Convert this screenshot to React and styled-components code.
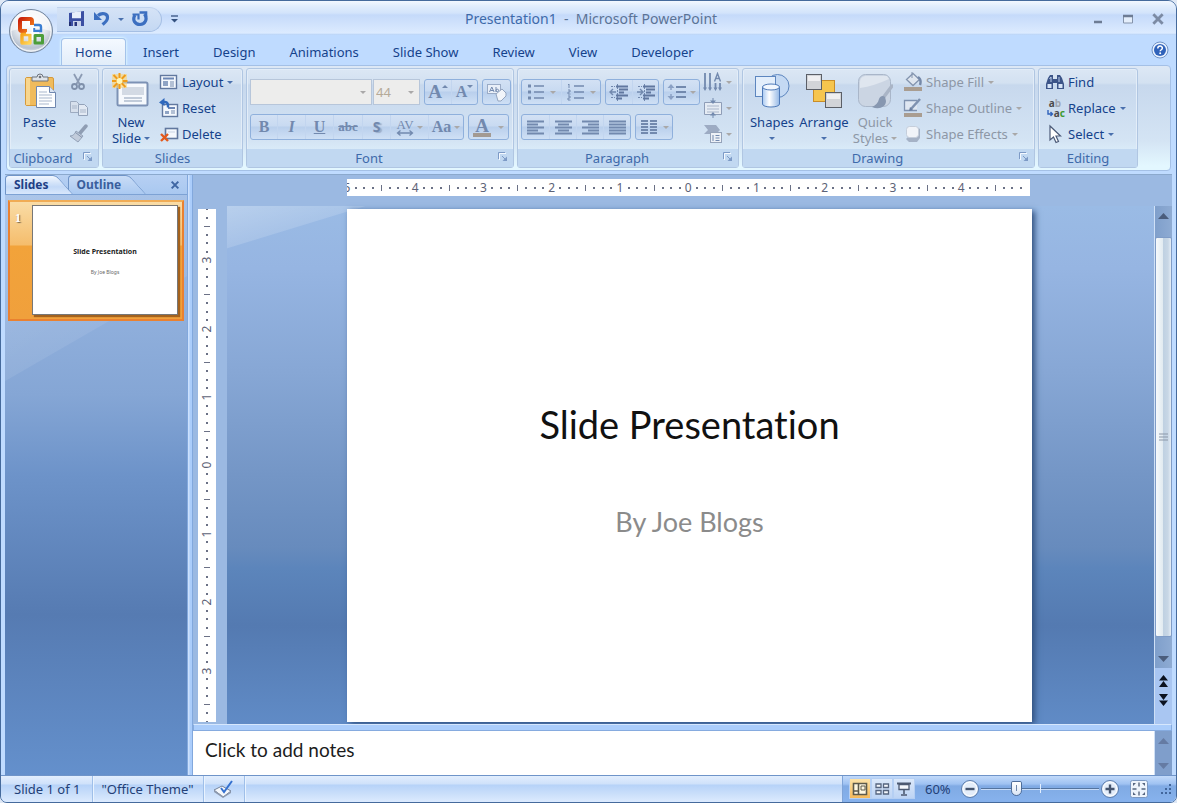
import React from 'react';
import styled, { createGlobalStyle, css } from 'styled-components';

const ink = '#15428b';
const muted = '#8d97a6';
const dim = '#7289ae';
const ui = "'Noto Sans', 'Open Sans', sans-serif";

const Global = createGlobalStyle`
  * { box-sizing: border-box; }
  body { margin: 0; background: #dfe8f5; font: 13px/16px ${ui}; color: ${ink}; }
  button, select, input, textarea { font: inherit; color: inherit; margin: 0; padding: 0; border: 0; background: none; }
  h1, h2, p { margin: 0; font-weight: 400; }
  svg { display: block; flex: none; }
`;

/* ---------- window frame ---------- */
const Window = styled.div`
  position: relative;
  min-height: 100vh;
  display: flex;
  flex-direction: column;
  border: 1px solid #456a9c;
  border-radius: 9px 9px 7px 7px;
  overflow: hidden;
  background: #bfdbff;
`;
const TitleBar = styled.header`
  display: flex;
  align-items: center;
  height: 34px;
  padding: 2px 8px 0 56px;
  background: linear-gradient(#f3f8ff 0, #e1edfd 5px, #d3e4fb 12px, #c5dafa 14px, #dcebff 32px, #b5d1f6 34px);
`;
const QuickBar = styled.div`
  display: flex;
  align-items: center;
  gap: 3px;
  width: 105px;
  height: 25px;
  padding: 0 8px 0 11px;
  border: 1px solid #a5bfe4;
  border-top-color: #c0d3ee;
  border-left: 0;
  border-radius: 0 13px 13px 0;
  background: linear-gradient(#d5e3f6, #c4d8f3);
`;
const IconButton = styled.button`
  display: flex;
  align-items: center;
  justify-content: center;
  min-width: ${p => p.$w || 20}px;
  height: ${p => p.$h || 22}px;
`;
const Title = styled.h1`
  flex: 1;
  padding-right: 92px;
  text-align: center;
  font-size: 14px;
  line-height: 18px;
  color: #5b7396;
  span { color: #3e6aaa; }
`;
const WindowButtons = styled.div`
  display: flex;
  gap: 10px;
`;
const Orb = styled.button`
  position: absolute;
  left: 7px;
  top: 6px;
  width: 46px;
  height: 46px;
`;

/* ---------- ribbon ---------- */
const TabRow = styled.nav`
  display: flex;
  align-items: flex-end;
  height: 30px;
  padding: 0 7px 0 60px;
`;
const RibbonTab = styled.button`
  height: 27px;
  padding: 0 17px;
  ${p => p.$active && css`
    padding: 0 13px;
    border: 1px solid #a4c3ea;
    border-bottom: 0;
    border-radius: 4px 4px 0 0;
    background: linear-gradient(#f4f9ff, #e2edf9);
    box-shadow: 0 0 2px 1px #d9f2ff;
  `}
`;
const HelpButton = styled.button`
  margin-left: auto;
  height: 30px;
`;
const Ribbon = styled.div`
  display: flex;
  gap: 3px;
  margin: 0 5px;
  padding: 2px;
  border: 1px solid #a4c0e6;
  border-radius: 4px;
  background: linear-gradient(#dde8f5 0, #d3e1f1 17px, #c7d8ed 19px, #d4e4f4 75px, #e3f7ff 100px);
`;
const Group = styled.section`
  display: flex;
  flex-direction: column;
  flex: none;
  width: ${p => p.$w}px;
  border: 1px solid #b0c6e2;
  border-radius: 3px;
  box-shadow: inset 0 0 0 1px #e3edf8;
`;
const GroupBody = styled.div`
  display: flex;
  height: 80px;
  padding: 0 3px;
`;
const GroupLabel = styled.footer`
  position: relative;
  height: 18px;
  line-height: 18px;
  text-align: center;
  color: #3e6aaa;
  background: #c1d8f1;
  padding-right: ${p => p.$launch ? 22 : 0}px;
`;
const Launcher = styled.button`
  position: absolute;
  right: 4px;
  top: 2px;
`;
const BigButton = styled.button`
  display: flex;
  flex-direction: column;
  align-items: center;
  width: ${p => p.$w}px;
  padding-top: 4px;
  line-height: 16px;
  color: ${p => p.disabled ? muted : ink};
  svg:first-child { margin-bottom: 5px; }
`;
const Caption = styled.span`
  display: flex;
  align-items: center;
  justify-content: center;
  gap: 3px;
  height: 16px;
`;
const Stack = styled.div`
  display: flex;
  flex-direction: column;
`;
const RowButton = styled.button`
  display: flex;
  align-items: center;
  gap: 3px;
  height: 26px;
  padding: 0 3px;
  white-space: nowrap;
  color: ${p => p.disabled ? muted : ink};
`;
const Caret = styled.i`
  width: 0;
  height: 0;
  margin-left: ${p => p.$gap || 0}px;
  border: 3px solid transparent;
  border-top-color: ${p => p.$c || '#4a70ad'};
  border-bottom-width: 0;
`;
const ToolRows = styled.div`
  display: flex;
  flex-direction: column;
  gap: 9px;
  padding-top: 10px;
`;
const ToolRow = styled.div`
  display: flex;
  gap: 4px;
`;
const ButtonSet = styled.div`
  display: flex;
  height: 26px;
  border: 1px solid #8fb0dc;
  border-radius: 3px;
  background: linear-gradient(#d3e1f4 0, #c8daf1 11px, #b9cfec 12px, #cfe0f5 24px);
`;
const Tool = styled.button`
  display: flex;
  align-items: center;
  justify-content: center;
  gap: 3px;
  width: ${p => p.$w}px;
  color: ${dim};
  font: ${p => p.$font || "bold 16px/20px 'Liberation Serif', serif"};
  text-decoration: ${p => p.$deco || 'none'};
  text-shadow: ${p => p.$shadow ? '2px 1px 1px #9badc9' : 'none'};
  & + & { border-left: 1px solid #c2d5ef; }
`;
const Combo = styled.label`
  display: flex;
  align-items: center;
  width: ${p => p.$w}px;
  height: 26px;
  padding-right: 5px;
  border: 1px solid #b7c6da;
  background: #ededec;
  select { flex: 1; min-width: 0; padding-left: 2px; appearance: none; color: #b5aa98; opacity: 1; }
`;
const ComboPair = styled.div`
  display: flex;
  gap: 1px;
`;

/* ---------- workspace ---------- */
const Workspace = styled.main`
  flex: 1;
  display: flex;
  margin: 3px 4px 0;
  border-top: 1px solid #8ba9cd;
`;
const Sidebar = styled.aside`
  display: flex;
  flex-direction: column;
  width: 182px;
  background:
    linear-gradient(150deg, #ffffff30 0, #ffffff14 178px, transparent 179px),
    linear-gradient(#9cbbe6 0, #93b2de 120px, #85a6d5 220px, #6d93c9 300px, #567bb2 440px, #6490cc 600px);
`;
const PaneTabs = styled.div`
  display: flex;
  align-items: stretch;
  height: 20px;
  border-bottom: 1px solid #7da2d4;
  background: linear-gradient(#b7d0f3, #a9c8f0);
`;
const PaneTab = styled.button`
  position: relative;
  z-index: ${p => p.$active ? 2 : 1};
  margin-right: ${p => p.$active ? 19 : 0}px;
  padding: 0 0 0 9px;
  font-weight: 700;
  font-size: 12px;
  line-height: 16px;
  color: ${p => p.$active ? '#1f3f85' : '#3a5f9d'};
  &::before, &::after {
    content: '';
    position: absolute;
    z-index: -1;
    border: 1px solid #6f94c8;
    background: ${p => p.$active ? 'linear-gradient(#f2f7fe, #c3d9f7 60%, #d8e7fc)' : 'linear-gradient(#c9dcf6, #aac9f1)'};
  }
  &::before {
    inset: 0 -7px 0 8px;
    border-width: 1px 1px 0 0;
    border-radius: 0 4px 0 0;
    transform: skewX(42deg);
    transform-origin: top;
  }
  &::after {
    inset: 0 12px 0 0;
    border-width: 1px 0 0 1px;
    border-radius: 4px 0 0 0;
  }
`;
const PaneClose = styled.button`
  margin-left: auto;
  padding: 0 7px 0 0;
`;
const Thumb = styled.button`
  display: flex;
  align-items: stretch;
  margin: 5px 3px 0;
  height: 121px;
  border: 2px solid #ea8130;
  border-top-color: #f0ac55;
  background: linear-gradient(#f9dca6 0, #f5bd6c 43px, #f2a33a 44px, #f0a03c);
`;
const ThumbNumber = styled.span`
  width: 22px;
  padding: 8px 6px 0 0;
  font: bold 12px/16px 'Liberation Serif', serif;
  color: #fff;
  text-shadow: 1px 1px 1px #7a6446;
`;
const ThumbPage = styled.span`
  flex: 1;
  margin: 3px 4px 4px 0;
  display: flex;
  flex-direction: column;
  align-items: center;
  padding-top: 41px;
  border: 1px solid #777;
  background: #fff;
  box-shadow: 2px 2px 1px #a4621d;
  color: #222;
  font: bold 7px/10px ${ui};
  small { margin-top: 11px; font: 5px/8px ${ui}; color: #666; }
`;
const Splitter = styled.div`
  width: 6px;
  border: 1px solid #82a8dd;
  border-width: 0 1px;
  background: linear-gradient(90deg, #d5e6fd, #abcdfb 60%);
`;
const Editor = styled.div`
  flex: 1;
  min-width: 0;
  display: flex;
  flex-direction: column;
`;
const Stage = styled.div`
  flex: 1;
  display: grid;
  grid-template: 31px 1fr / 34px 1fr 18px;
  background: #9bb9e2;
`;
const RulerTop = styled.div`
  grid-column: 2;
  display: flex;
  align-items: flex-start;
  padding: 4px 124px 0 120px;
`;
const Scale = styled.div`
  display: flex;
  justify-content: space-between;
  align-items: center;
  flex: 1;
  overflow: hidden;
  background: #fff;
  font-size: 12px;
  line-height: 16px;
  color: #5c6277;
  ${p => p.$v ? css`flex-direction: column; width: 18px;` : css`height: 17px;`}
`;
const Mark = styled.span`
  display: flex;
  align-items: center;
  justify-content: center;
  flex: none;
  ${p => p.$v ? css`height: 0; span { transform: rotate(-90deg); }` : css`width: 0;`}
`;
const Tick = styled.i`
  flex: none;
  background: #6b7186;
  ${p => {
    const long = p.$half ? 6 : 2;
    const thick = p.$half ? 1 : 2;
    return p.$v ? `width: ${long}px; height: ${thick}px;` : `width: ${thick}px; height: ${long}px;`;
  }}
`;
const RulerLeft = styled.div`
  grid-column: 1;
  display: flex;
  padding: 3px 11px 2px 5px;
`;
const Canvas = styled.div`
  display: flex;
  padding: 3px 122px 2px 120px;
  background:
    linear-gradient(163deg, #ffffff4d 0, #ffffff26 40px, transparent 41px),
    linear-gradient(#9abbe5 0, #96b5e2 12%, #87a7d5 32%, #7496c6 52%, #678bbd 66%, #5c85bb 70%, #547ab1 81%, #608bc6 100%);
`;
const Slide = styled.article`
  flex: 1;
  display: flex;
  flex-direction: column;
  align-items: center;
  padding-top: 190px;
  background: #fff;
  box-shadow: 3px 2px 6px #30507f;
  font-family: Lato, 'Open Sans', sans-serif;
  font-variant-ligatures: none;
`;
const SlideTitle = styled.h2`
  font-size: 38px;
  line-height: 50px;
  color: #111;
`;
const Subtitle = styled.p`
  margin-top: 56px;
  font-size: 27px;
  line-height: 34px;
  color: #8b8b8b;
`;
const Scroll = styled.div`
  display: flex;
  flex-direction: column;
  border-left: 1px solid #cfe0f6;
  background: #a9c6f2;
`;
const ScrollTrack = styled.div`
  flex: 1;
  display: flex;
  flex-direction: column;
  background: linear-gradient(90deg, #7f9fcb, #8eabd3);
`;
const Arrow = styled.button`
  height: ${p => p.$h || 19}px;
  display: flex;
  flex-direction: column;
  align-items: center;
  justify-content: center;
`;
const ScrollThumb = styled.div`
  flex: 1;
  display: flex;
  align-items: center;
  justify-content: center;
  margin-top: 12px;
  margin-bottom: 12px;
  border: 1px solid #7f9cc7;
  border-radius: 2px;
  background: linear-gradient(90deg, #f6f9fb, #e2ebf1 45%, #c0d1e2 50%, #c8d7e6 80%, #e6eef6);
`;
const PagerButtons = styled.div`
  height: 56px;
  padding-top: 3px;
  display: flex;
  flex-direction: column;
  align-items: center;
`;
const HSplitter = styled.div`
  height: 7px;
  border: 1px solid #86abdf;
  border-top-color: #d6e7fd;
  background: #abcdfb;
`;
const Notes = styled.div`
  display: flex;
  height: 44px;
  background: #fff;
  textarea {
    flex: 1;
    padding: 7px 12px;
    border: 0;
    outline: 0;
    resize: none;
    overflow: hidden;
    font: 19px/24px Lato, 'Open Sans', sans-serif;
    color: #1c1c1c;
  }
  textarea::placeholder { color: #1c1c1c; opacity: 1; }
`;
const NotesScroll = styled.div`
  display: flex;
  flex-direction: column;
  justify-content: space-between;
  width: 18px;
  border-left: 1px solid #cfe0f6;
  background: #7f9ecb;
`;

/* ---------- status bar ---------- */
const StatusBar = styled.footer`
  display: flex;
  align-items: stretch;
  height: 27px;
  border-top: 1px solid #6f94c9;
  background: linear-gradient(#e2eefe 0, #cfe1fa 8px, #b6d2f8 9px, #cfe2fb 20px, #dcebff);
  color: #233f77;
`;
const StatusItem = styled.div`
  display: flex;
  align-items: center;
  padding: 0 9px 1px;
  border-right: 1px solid #9fbfe9;
  box-shadow: 1px 0 #e9f3ff;
  &:first-child { padding-left: 13px; padding-right: 11px; }
`;
const StatusRight = styled.div`
  display: flex;
  align-items: center;
  margin-left: auto;
  padding: 0 4px 1px 6px;
  border-left: 1px solid #7fa4d8;
  background: linear-gradient(#c2dafa 0, #9fc2f2 8px, #80aae4 10px, #86b1ec 24px);
`;
const ViewSet = styled.div`
  display: flex;
  margin-right: 10px;
`;
const ViewButton = styled.button`
  display: flex;
  align-items: center;
  justify-content: center;
  width: 22px;
  height: 21px;
  border: 1px solid #b5cff3;
  background: ${p => p.$on ? 'linear-gradient(#fde3a8, #f5b95a)' : 'linear-gradient(#dbe8fa, #bdd4f4)'};
`;
const Percent = styled.span`
  width: 35px;
`;
const Zoom = styled.input`
  appearance: none;
  width: 118px;
  height: 20px;
  margin: 0 1px;
  background:
    linear-gradient(#e3efff, #e3efff) 59px 50% / 1px 9px no-repeat,
    linear-gradient(#54749f 0 1px, #c6dbf8 1px) 0 50% / 100% 2px no-repeat;
  &::-webkit-slider-thumb {
    appearance: none;
    width: 11px;
    height: 15px;
    border: 1px solid #4e6d99;
    border-radius: 2px 2px 6px 6px;
    background:
      linear-gradient(#6f87aa, #6f87aa) 50% 3px / 1px 6px no-repeat,
      linear-gradient(#fff, #d9e5f5);
  }
`;

/* ---------- drawings ---------- */
const Svg = ({ w = 20, h = w, vw = w, vh = h, children }) => (
  <svg width={w} height={h} viewBox={`0 0 ${vw} ${vh}`} fill="none" aria-hidden="true">{children}</svg>
);
const OfficeLogo = () => (
  <Svg w={46}>
    <defs>
      <radialGradient id="orb" cx=".5" cy=".3" r=".75"><stop offset="0" stopColor="#fff" /><stop offset=".5" stopColor="#e4e8ee" /><stop offset=".8" stopColor="#b9c3d1" /><stop offset="1" stopColor="#f5f8fc" /></radialGradient>
      <linearGradient id="lr" x2="1" y2="1"><stop stopColor="#c8200a" /><stop offset="1" stopColor="#f98a1e" /></linearGradient>
      <linearGradient id="ly" x2="1" y2="1"><stop stopColor="#f6a41a" /><stop offset="1" stopColor="#ffd65a" /></linearGradient>
    </defs>
    <circle cx="23" cy="24" r="21.5" fill="url(#orb)" stroke="#73869f" />
    <path d="M3 24a20 20 0 0 1 40 0q-20-7-40 0z" fill="#fff" opacity=".55" />
    <circle cx="23" cy="24" r="20" stroke="#fff" opacity=".8" />
    <path d="M19 24h-5a2 2 0 0 1-2-2v-8a2 2 0 0 1 2-2h8a2 2 0 0 1 2 2v4" stroke="url(#lr)" strokeWidth="4" />
    <path d="M26 18h5a2 2 0 0 1 2 2v4h-7v-3" stroke="#3a7ed2" strokeWidth="2.4" />
    <path d="M22 27.500v8.500h-8v-8.500z" stroke="url(#ly)" strokeWidth="3.4" strokeLinejoin="round" />
    <path d="M27 28.500h7.500v7.500h-7.500z" stroke="#4c9e3a" strokeWidth="3" strokeLinejoin="round" />
    <path d="M24.500 20v6M18 26h13M24.500 26v7" stroke="#fff" strokeWidth="1.500" />
  </Svg>
);
const SaveIcon = () => (
  <Svg w={18}><path d="M1 3l15-2v15H1z" fill="#3b4fa3" /><path d="M4 2.5l9-1.200v7H4z" fill="#e7eefb" /><path d="M5 11h8v5H5z" fill="#c9d3ea" /><path d="M6.500 12h2.500v4H6.500z" fill="#27357c" /><path d="M1 12h2v4H1z" fill="#222f70" /></Svg>
);
const UndoIcon = () => (
  <Svg w={18}><path d="M5 5.500c4-3.500 10-2 9.500 2.500-.2 3-2.500 4.500-5 6.500" stroke="#3c6fc0" strokeWidth="3.2" /><path d="M1 2v8h8z" fill="#3c6fc0" /></Svg>
);
const RedoIcon = () => (
  <Svg w={18}><path d="M4 5c-3 5 0 9.500 5 9.500S17 9 13.500 4" stroke="#3c6fc0" strokeWidth="3.2" /><path d="M1.500 4.500h6v5" stroke="#3c6fc0" strokeWidth="2.200" /><path d="M8.500 2.500h6.500v4" stroke="#3c6fc0" strokeWidth="2.600" /></Svg>
);
const CustomizeIcon = () => <Svg w={9} h={8}><path d="M1 1h7" stroke="#4a6491" strokeWidth="1.500" /><path d="M1 4h7L4.500 7.500z" fill="#34517f" /></Svg>;
const MinIcon = () => <Svg w={12}><path d="M2 9h8" stroke="#6d7c94" strokeWidth="2.400" /></Svg>;
const MaxIcon = () => <Svg w={12}><path d="M1.500 3h9v7h-9z" stroke="#8493aa" fill="#e4eefb" /><path d="M1 3h10" stroke="#6d7c94" strokeWidth="2.600" /></Svg>;
const CloseIcon = ({ s = 12, c = '#7c8ba4' }) => <Svg w={s} vw={12} vh={12}><path d="M2 2l8 8M10 2l-8 8" stroke={c} strokeWidth="2.400" /></Svg>;
const HelpIcon = () => (
  <Svg w={18}><circle cx="9" cy="9" r="8" fill="#e8f1fd" stroke="#7193c6" /><circle cx="9" cy="9" r="6" fill="#2f62ba" /><path d="M6.800 7.400c0-3 4.600-3 4.600-.3 0 1.700-2.200 1.600-2.200 3.200" stroke="#fff" strokeWidth="1.500" /><circle cx="9.200" cy="12.300" r="1" fill="#fff" /></Svg>
);
const LaunchIcon = () => <Svg w={12}><path d="M1.500 8V1.500H8" stroke="#7d9ac6" /><path d="M2.500 9V2.500H9" stroke="#f4f9ff" /><path d="M5 5l4 4" stroke="#7d9ac6" /><path d="M10 5.500V10H5.500z" fill="#7d9ac6" /></Svg>;
const PasteIcon = () => (
  <Svg w={36}>
    <rect x="3.500" y="4.500" width="28" height="28" rx="1.500" fill="#f0bb5c" stroke="#d69a3a" />
    <path d="M4 5h4v27H4z" fill="#f8d68e" />
    <path d="M10 8V4h5a3 3 0 0 1 6 0h5v4z" fill="#dfe3e8" stroke="#6e747d" /><circle cx="18" cy="4" r="1.300" fill="#6e747d" />
    <path d="M14.500 13.500h13l6 6v15h-19z" fill="#fdfeff" stroke="#6f87af" /><path d="M27.500 13.500v6h6" fill="#dbe4f1" stroke="#6f87af" />
    <path d="M17 19h8M17 22h13M17 25h13M17 28h13M17 31h10" stroke="#a9b7cd" />
  </Svg>
);
const CutIcon = () => <Svg w={18}><path d="M5 1l5.500 10M13 1L7.500 11" stroke="#8c9bb3" strokeWidth="1.800" /><circle cx="5.500" cy="13.500" r="2.500" stroke="#7f90aa" strokeWidth="1.800" /><circle cx="12.500" cy="13.500" r="2.500" stroke="#7f90aa" strokeWidth="1.800" /></Svg>;
const CopyIcon = () => <Svg w={20}><path d="M1.500 3.500h6l3 3v8h-9z" fill="#d7e0ec" stroke="#9dabc0" /><path d="M9.500 6.500h6l3 3v8h-9z" fill="#e2e9f3" stroke="#93a2b9" /><path d="M3 8h5M3 10h5M11 12h6M11 14h6" stroke="#a9b6c9" /></Svg>;
const BrushIcon = () => <Svg w={20}><path d="M17 2l-6 7" stroke="#8f9db3" strokeWidth="3.500" strokeLinecap="round" /><path d="M7 7l7 5-5 6-8-6c3 0 5-2 6-5z" fill="#c2ccdb" stroke="#93a2b8" /><path d="M6.500 8.500l6.500 5" stroke="#8292ab" /></Svg>;
const NewSlideIcon = () => (
  <Svg w={38} h={36}>
    <rect x="5.500" y="9.500" width="30" height="23" rx="1.500" fill="#f6f9fd" stroke="#7d92b5" strokeWidth="2" />
    <path d="M10 14h22v8H10z" fill="#d3dae4" /><path d="M12 25h18M12 28h18" stroke="#b0bccd" strokeWidth="1.500" />
    <path d="M0 1h15v14H0z" fill="#fbd474" opacity=".6" />
    <path d="M7.500 0v16M0 8h15.500M1.500 2l12 12M13.500 2l-12 12" stroke="#f09c18" strokeWidth="2" /><circle cx="7.500" cy="8" r="3" fill="#fff6b8" />
  </Svg>
);
const LayoutIcon = () => <Svg w={20}><rect x="1.500" y="3.500" width="16" height="13" fill="#f4f8fd" stroke="#61789f" strokeWidth="1.400" /><path d="M4 5.500h11v2H4z" fill="#6c86b4" /><path d="M4 9h5v5H4z" fill="#8ea3c4" /><path d="M11 10h4M11 12h4M11 14h4" stroke="#7389ad" /></Svg>;
const ResetIcon = () => <Svg w={20}><rect x="3.500" y="6.500" width="15" height="12" fill="#f4f8fd" stroke="#61789f" strokeWidth="1.400" /><path d="M9 9h7v2H9z" fill="#6c86b4" /><path d="M6 13h4v3H6z" fill="#8ea3c4" /><path d="M12 13h4M12 15h4" stroke="#7389ad" /><path d="M3 4.500c4-1.500 6.500 0 6 5" stroke="#2f68bd" strokeWidth="2.400" /><path d="M0 4.500L5.500 0v8z" fill="#2f68bd" /></Svg>;
const DeleteIcon = () => <Svg w={20}><rect x="6.500" y="4.500" width="12" height="10" fill="#f4f8fd" stroke="#61789f" strokeWidth="1.600" /><path d="M9 8h7" stroke="#c9d4e4" /><path d="M2 10l7 7M9 10l-7 7" stroke="#e35a1c" strokeWidth="2.400" /></Svg>;
const EraserIcon = () => <Svg w={22}><rect x="1.500" y="3.500" width="13" height="9" fill="#e9eff8" stroke="#9aabc6" /><path d="M3.500 11l2.300-5 2.300 5M4.500 9.500h3M10 6v5M10 9.500a1.300 1.300 0 1 0 2.600 0 1.300 1.300 0 1 0-2.600 0" stroke={dim} /><path d="M10 13l6-5 4 4v3l-5 5h-3z" fill="#f2f5fa" stroke="#93a4bf" /></Svg>;
const Lines = ({ rows }) => rows.map(([a, b], i) => <path key={i} d={`M${a} ${3.5 + i * 3}h${b}`} stroke={dim} strokeWidth="2" />);
const BulletIcon = ({ num }) => (
  <Svg w={18}>{[3, 9, 15].map((y, i) => <g key={y}><path d={`M7 ${y}h10`} stroke={dim} strokeWidth="1.600" />{num ? <path d={i ? `M1 ${y - 2}h2v2H1v2h2.500` : `M1 2l1-1v4`} stroke={dim} /> : <rect x="1" y={y - 1.5} width="3" height="3" fill={dim} />}</g>)}</Svg>
);
const IndentIcon = ({ out }) => (
  <Svg w={20} h={18}><path d="M2 3.500h4M2 14.500h4M8.500 1v17" stroke={dim} strokeDasharray="2 1" /><path d="M7 3.500h12M10 6.500h9M10 9.500h5M7 12.500h12M7 15.500h6" stroke="#60779f" strokeWidth="2" /><path d={out ? 'M7 9H1M4 6L1 9l3 3' : 'M1 9h6M4 6l3 3-3 3'} stroke={dim} strokeWidth="1.400" /></Svg>
);
const SpacingIcon = () => <Svg w={20} h={18}><path d="M9 4h10M9 9h10M9 14h10" stroke={dim} strokeWidth="2" /><path d="M4 1l3.500 4h-7zM4 17l3.500-4h-7z" fill="#8aa0c4" /><path d="M4 4v3M4 11v3" stroke="#8aa0c4" strokeWidth="1.500" /></Svg>;
const AlignIcon = ({ kind }) => {
  const rows = { left: [[1, 17], [1, 11], [1, 17], [1, 11], [1, 17]], center: [[1, 17], [4, 11], [1, 17], [4, 11], [1, 17]], right: [[1, 17], [7, 11], [1, 17], [7, 11], [1, 17]], full: [[1, 17], [1, 17], [1, 17], [1, 17], [1, 17]] }[kind];
  return <Svg w={19}><Lines rows={rows} /></Svg>;
};
const ColumnsIcon = () => <Svg w={18}>{[3, 6, 9, 12, 15].map(y => <path key={y} d={`M1 ${y}h7M10 ${y}h7`} stroke={dim} strokeWidth="2" />)}</Svg>;
const DirectionIcon = () => <Svg w={20}><path d="M2 1v16M7 1v16M12.500 11v6M17 11v6" stroke={dim} strokeWidth="1.800" /><path d="M11.500 9.500l3-8 3 8M12.500 6.500h4" stroke={dim} strokeWidth="1.400" /><path d="M0 15.500h4l-2 3.500zM5 15.500h4l-2 3.500zM10.500 15.500h4l-2 3.500zM15 15.500h4l-2 3.500z" fill={dim} /></Svg>;
const AlignTextIcon = () => <Svg w={20}><path d="M1.500 4.500h17v12h-17z" fill="#e6ecf4" stroke="#8e9db7" /><path d="M4 8h12M4 11h12M4 14h12" stroke="#aab6ca" /><path d="M10 0v5M10 15v5" stroke={dim} /><path d="M7 2.500h6L10 6zM7 17.500h6L10 14z" fill={dim} /></Svg>;
const SmartArtIcon = () => <Svg w={20}><path d="M1 1h12l4 5-4 4H1l4-4z" fill="#9dabc3" /><rect x="7.500" y="8.500" width="11" height="10" fill="#edf1f7" stroke="#95a3ba" /><path d="M10 11v6M12.500 11.500h4M12.500 14h4M12.500 16.500h4" stroke={dim} /></Svg>;
const ShapesIcon = () => (
  <Svg w={36}>
    <defs><linearGradient id="sh" x2="1"><stop stopColor="#a9c9f1" /><stop offset=".4" stopColor="#fff" /><stop offset="1" stopColor="#94b8e6" /></linearGradient></defs>
    <circle cx="23.500" cy="13" r="11.500" fill="#c4d9f3" stroke="#5d86bf" /><rect x="1.500" y="3.500" width="20" height="20" fill="#e3eefb" stroke="#5d86bf" />
    <path d="M8.500 14v17c0 4 17 4 17 0V14z" fill="url(#sh)" stroke="#4f7ab8" /><ellipse cx="17" cy="14" rx="8.500" ry="3" fill="#f2f7fe" stroke="#4f7ab8" />
  </Svg>
);
const ArrangeIcon = () => (
  <Svg w={38} h={36}><rect x="8.500" y="7.500" width="21" height="21" fill="#f6c54e" stroke="#c98d28" /><rect x="1.500" y="1.500" width="15" height="15" fill="#d2d4d8" stroke="#5b5f67" /><path d="M3 3h12v5H3z" fill="#efeff1" /><rect x="20.500" y="19.500" width="16" height="15" fill="#d2d4d8" stroke="#5b5f67" /><path d="M22 21h13v5H22z" fill="#efeff1" /></Svg>
);
const QuickIcon = () => (
  <Svg w={36}><rect x="1.500" y="1.500" width="32" height="32" rx="7" fill="#cbd5e3" stroke="#a9b6c9" /><path d="M3 15q14-2 29-9l-2-3H8Q3 4 3 9z" fill="#dfe6ef" /><path d="M35 13L26 25" stroke="#aab5c6" strokeWidth="3.500" strokeLinecap="round" /><path d="M28 24c-2-2-5-1-6 2-1 4-3 6-7 8 7 3 14 0 14-6z" fill="#8797b0" /></Svg>
);
const FillIcon = () => <Svg w={20}><path d="M10 1.500l6.500 6-6.500 6-6.500-6z" fill="#dfe6ef" stroke="#8495af" strokeWidth="1.300" /><path d="M15 5c3 2 3 5 2 8" stroke="#7589a9" strokeWidth="2.400" /><path d="M9 0v6" stroke="#8495af" /><path d="M1 15h18v4H1z" fill="#a99d91" /></Svg>;
const OutlineIcon = () => <Svg w={20}><path d="M14 2.500H1.500v10H14" fill="#dfe7f2" stroke="#7f92b0" strokeWidth="1.300" /><path d="M17 1L8 11" stroke="#7f92b0" strokeWidth="2.600" /><path d="M6 13l1-4 3 3z" fill="#6b7f9f" /><path d="M1 15h18v4H1z" fill="#a99d91" /></Svg>;
const EffectsIcon = () => <Svg w={20}><path d="M5 13l-2 2 3 3h8l3-4V5l-3-2z" fill="#a5b2c6" /><rect x="3.500" y="2.500" width="12" height="11" rx="3" fill="#f1f4f9" stroke="#c5cedb" /></Svg>;
const FindIcon = () => <Svg w={20} h={18}><path d="M3 5l2-3h3v14H1v-5zM17 5l-2-3h-3v14h7v-5z" fill="#3c5488" /><path d="M8 6h4v4H8z" fill="#3c5488" /><path d="M2.500 11h4v4h-4zM13.500 11h4v4h-4z" fill="#d7e4f7" /><path d="M4.500 6L6 4v5M14 4v5" stroke="#b9cbe8" /></Svg>;
const ReplaceArt = styled.span`
  display: flex;
  flex-direction: column;
  width: 20px;
  font: bold 10px/10px ${ui};
  color: #4b4b4b;
  em { font-style: normal; color: #3f9b33; }
  i { font-style: normal; color: #9fa6b2; }
`;
const ReplaceLower = styled.span`
  display: flex;
  align-items: center;
  justify-content: flex-end;
`;
const ReplaceIcon = () => (
  <ReplaceArt aria-hidden="true">
    <span>a<i>b</i></span>
    <ReplaceLower><Svg w={7}><path d="M1 0v4h4M3.500 2l2 2-2 2" stroke="#2f62ba" strokeWidth="1.400" /></Svg>a<em>c</em></ReplaceLower>
  </ReplaceArt>
);
const CursorIcon = () => <Svg w={20}><path d="M5 2v14l3.500-3 2.500 5.500 2.500-1-2.500-5.500H15.500z" fill="#fff" stroke="#4c5b78" strokeWidth="1.200" /></Svg>;
const Tri = ({ up, c = '#4b5d7c' }) => <Svg w={11} h={6}><path d={up ? 'M0 6h11L5.500 0z' : 'M0 0h11L5.500 6z'} fill={c} /></Svg>;
const Double = ({ up }) => <Svg w={9} h={12}><path d={up ? 'M0 5.500h9L4.500 0zM0 12h9L4.500 6z' : 'M0 0h9L4.500 6zM0 6.500h9L4.500 12z'} fill="#0b1220" /></Svg>;
const GripLines = () => <Svg w={9} h={9}><path d="M0 1h9M0 4h9M0 7h9" stroke="#8b97a8" /></Svg>;
const NormalIcon = () => <Svg w={16}><path d="M1.500 2.500h13v11h-13zM6.500 2.500v11M1 10h5" stroke="#5d5a4c" strokeWidth="1.600" fill="#fff7e0" /><path d="M9 5h4v4H9z" stroke="#5d5a4c" /></Svg>;
const SorterIcon = () => <Svg w={16}><path d="M2 3h5v3.500H2zM9.500 3h5v3.500h-5zM2 9.500h5V13H2zM9.500 9.500h5V13h-5z" fill="#f5f8fd" stroke="#56657f" strokeWidth="1.300" /></Svg>;
const ShowIcon = () => <Svg w={16}><path d="M1 2.500h14" stroke="#4d5a72" strokeWidth="2" /><path d="M3 3.500h10v5H3z" fill="#f5f8fd" stroke="#4d5a72" strokeWidth="1.300" /><path d="M8 8v5M5 14h6" stroke="#4d5a72" strokeWidth="1.600" /></Svg>;
const RoundIcon = ({ plus }) => <Svg w={20}><circle cx="10" cy="10" r="8.500" fill="#e3edfa" stroke="#597baa" /><circle cx="10" cy="10" r="7" stroke="#fff" /><path d={plus ? 'M5.500 10h9M10 5.500v9' : 'M5.500 10h9'} stroke="#45556f" strokeWidth="2.400" /></Svg>;
const FitIcon = () => <Svg w={20}><rect x="1.500" y="1.500" width="17" height="17" rx="2" fill="#eef4fc" stroke="#7b98c2" /><path d="M10 3.500v4M10 12.500v4M3.500 10h4M12.500 10h4" stroke="#56657f" strokeWidth="1.400" /><path d="M4 4h3L4 7zM16 4v3l-3-3zM4 16v-3l3 3zM16 16h-3l3-3z" fill="#56657f" /></Svg>;
const SpellIcon = () => <Svg w={22} h={18}><path d="M1 10l8-4 9 5-8 6z" fill="#f5f8fc" stroke="#74829a" /><path d="M1 10v2l9 6v-2zM10 17l8-6v2l-8 5z" fill="#8d99ae" /><path d="M8 8l3 4 8-11" stroke="#3571cf" strokeWidth="2" /></Svg>;
const GripIcon = () => <Svg w={14}><path d="M11 2h2v2h-2zM7 6h2v2H7zM11 6h2v2h-2zM3 10h2v2H3zM7 10h2v2H7zM11 10h2v2h-2z" fill="#41669c" /></Svg>;
const AvArrow = () => <Svg w={18} h={6}><path d="M2 3h14M4.500 .500L1.500 3l3 2.500M13.500 .500l3 2.500-3 2.500" stroke={dim} strokeWidth="1.300" /></Svg>;

const LetterStack = styled.span`
  display: flex;
  flex-direction: column;
  align-items: center;
  font: ${p => p.$light ? '' : 'bold '}${p => p.$s}px/${p => p.$lh}px 'Liberation Serif', serif;
`;
const ColorBar = styled.i`
  width: 18px;
  height: 4px;
  background: #a39a92;
`;
const Sup = styled.i`
  align-self: flex-start;
  margin: 5px 0 0 -3px;
  border: 3px solid transparent;
  ${p => p.$up ? `border-bottom-color: ${dim}; border-top: 0;` : `border-top-color: ${dim}; border-bottom: 0;`}
`;

const fade = '#a9a8a8';
const Row = ({ icon, children, caret, off, label }) => (
  <RowButton disabled={off} aria-label={label}>{icon}{children}{caret && <Caret $gap={children ? 1 : 0} $c={off ? fade : undefined} />}</RowButton>
);
const Big = ({ icon, lines, w, off }) => (
  <BigButton $w={w} disabled={off}>
    {icon}
    <Caption>{lines[0]}</Caption>
    <Caption>{lines[1]}<Caret $c={off ? fade : undefined} /></Caption>
  </BigButton>
);
const Panel = ({ w, label, launch, children }) => (
  <Group $w={w} aria-label={label}>
    <GroupBody>{children}</GroupBody>
    <GroupLabel $launch={launch}>{label}{launch && <Launcher aria-label={`${label} options`}><LaunchIcon /></Launcher>}</GroupLabel>
  </Group>
);
const Ruler = ({ vertical, from, to }) => {
  const marks = [];
  for (let i = from; i <= to; i++) {
    const n = Math.abs(i);
    marks.push(
      <Mark key={i} $v={vertical}>
        {i === 40 ? null : n % 8 === 0 ? <span>{n / 8}</span> : <Tick $v={vertical} $half={n % 4 === 0} />}
      </Mark>
    );
  }
  return <Scale $v={vertical}>{marks}</Scale>;
};

const tabs = ['Home', 'Insert', 'Design', 'Animations', 'Slide Show', 'Review', 'View', 'Developer'];

export default function App() {
  return (
    <>
      <Global />
      <Window>
        <TitleBar>
          <QuickBar>
            <IconButton aria-label="Save" $w={18}><SaveIcon /></IconButton>
            <IconButton aria-label="Undo" $w={26}><UndoIcon /></IconButton>
            <Caret />
            <IconButton aria-label="Redo" $w={26}><RedoIcon /></IconButton>
          </QuickBar>
          <IconButton aria-label="Customize toolbar" $w={24}><CustomizeIcon /></IconButton>
          <Title><span>Presentation1</span>&nbsp; - &nbsp;Microsoft PowerPoint</Title>
          <WindowButtons>
            <IconButton aria-label="Minimize"><MinIcon /></IconButton>
            <IconButton aria-label="Maximize"><MaxIcon /></IconButton>
            <IconButton aria-label="Close"><CloseIcon s={14} /></IconButton>
          </WindowButtons>
        </TitleBar>
        <Orb aria-label="Office menu"><OfficeLogo /></Orb>
        <TabRow>
          {tabs.map((t, i) => <RibbonTab key={t} $active={i === 0}>{t}</RibbonTab>)}
          <HelpButton aria-label="Help"><HelpIcon /></HelpButton>
        </TabRow>
        <Ribbon>
          <Panel w={90} label="Clipboard" launch>
            <Big w={53} icon={<PasteIcon />} lines={['Paste']} />
            <Stack>
              <Row off label="Cut" icon={<CutIcon />} />
              <Row off label="Copy" icon={<CopyIcon />} />
              <Row off label="Format painter" icon={<BrushIcon />} />
            </Stack>
          </Panel>
          <Panel w={141} label="Slides">
            <Big w={50} icon={<NewSlideIcon />} lines={['New', 'Slide']} />
            <Stack>
              <Row icon={<LayoutIcon />} caret>Layout</Row>
              <Row icon={<ResetIcon />}>Reset</Row>
              <Row icon={<DeleteIcon />}>Delete</Row>
            </Stack>
          </Panel>
          <Panel w={268} label="Font" launch>
            <ToolRows>
              <ToolRow>
                <ComboPair>
                  <Combo $w={122}><select aria-label="Font" disabled><option> </option></select><Caret $c={fade} /></Combo>
                  <Combo $w={47}><select aria-label="Font size" disabled><option>44</option></select><Caret $c={fade} /></Combo>
                </ComboPair>
                <ButtonSet>
                  <Tool $w={26} $font="bold 19px/22px 'Liberation Serif', serif">A<Sup $up /></Tool>
                  <Tool $w={26}>A<Sup /></Tool>
                </ButtonSet>
                <ButtonSet><Tool $w={27} aria-label="Clear formatting"><EraserIcon /></Tool></ButtonSet>
              </ToolRow>
              <ToolRow>
                <ButtonSet>
                  <Tool $w={26}>B</Tool>
                  <Tool $w={28} $font="italic bold 16px/20px 'Liberation Serif', serif">I</Tool>
                  <Tool $w={28} $deco="underline">U</Tool>
                  <Tool $w={29} $deco="line-through" $font="bold 13px/20px 'Liberation Serif', serif">abc</Tool>
                  <Tool $w={28} $shadow $font={`bold 14px/20px ${ui}`}>S</Tool>
                  <Tool $w={38}><LetterStack $s={13} $lh={11} $light>AV<AvArrow /></LetterStack><Caret $c={fade} /></Tool>
                  <Tool $w={35}>Aa<Caret $c={fade} /></Tool>
                </ButtonSet>
                <ButtonSet><Tool $w={39}><LetterStack $s={19} $lh={15}>A<ColorBar /></LetterStack><Caret $gap={4} $c={fade} /></Tool></ButtonSet>
              </ToolRow>
            </ToolRows>
          </Panel>
          <Panel w={222} label="Paragraph" launch>
            <ToolRows>
              <ToolRow>
                <ButtonSet>
                  <Tool $w={39} aria-label="Bullets"><BulletIcon /><Caret $gap={2} $c={fade} /></Tool>
                  <Tool $w={39} aria-label="Numbering"><BulletIcon num /><Caret $gap={2} $c={fade} /></Tool>
                </ButtonSet>
                <ButtonSet>
                  <Tool $w={26} aria-label="Decrease indent"><IndentIcon out /></Tool>
                  <Tool $w={26} aria-label="Increase indent"><IndentIcon /></Tool>
                </ButtonSet>
                <ButtonSet><Tool $w={35} aria-label="Line spacing"><SpacingIcon /><Caret $c={fade} /></Tool></ButtonSet>
              </ToolRow>
              <ToolRow>
                <ButtonSet>
                  {['left', 'center', 'right', 'full'].map(k => <Tool key={k} $w={27} aria-label={`Align ${k}`}><AlignIcon kind={k} /></Tool>)}
                </ButtonSet>
                <ButtonSet><Tool $w={36} aria-label="Columns"><ColumnsIcon /><Caret $gap={2} $c={fade} /></Tool></ButtonSet>
              </ToolRow>
            </ToolRows>
            <Stack>
              <Row off caret label="Text direction" icon={<DirectionIcon />} />
              <Row off caret label="Align text" icon={<AlignTextIcon />} />
              <Row off caret label="Convert to SmartArt" icon={<SmartArtIcon />} />
            </Stack>
          </Panel>
          <Panel w={293} label="Drawing" launch>
            <Big w={52} icon={<ShapesIcon />} lines={['Shapes']} />
            <Big w={52} icon={<ArrangeIcon />} lines={['Arrange']} />
            <Big w={50} off icon={<QuickIcon />} lines={['Quick', 'Styles']} />
            <Stack>
              <Row off caret icon={<FillIcon />}>Shape Fill</Row>
              <Row off caret icon={<OutlineIcon />}>Shape Outline</Row>
              <Row off caret icon={<EffectsIcon />}>Shape Effects</Row>
            </Stack>
          </Panel>
          <Panel w={100} label="Editing">
            <Stack>
              <Row icon={<FindIcon />}>Find</Row>
              <Row icon={<ReplaceIcon />} caret>Replace</Row>
              <Row icon={<CursorIcon />} caret>Select</Row>
            </Stack>
          </Panel>
        </Ribbon>
        <Workspace>
          <Sidebar>
            <PaneTabs>
              <PaneTab $active>Slides</PaneTab>
              <PaneTab>Outline</PaneTab>
              <PaneClose aria-label="Close pane"><CloseIcon s={10} c="#3f66a3" /></PaneClose>
            </PaneTabs>
            <Thumb aria-label="Slide 1">
              <ThumbNumber>1</ThumbNumber>
              <ThumbPage>Slide Presentation<small>By Joe Blogs</small></ThumbPage>
            </Thumb>
          </Sidebar>
          <Splitter />
          <Editor>
            <Stage>
              <RulerTop><Ruler from={-40} to={40} /></RulerTop>
              <RulerLeft><Ruler vertical from={-30} to={30} /></RulerLeft>
              <Canvas>
                <Slide>
                  <SlideTitle>Slide Presentation</SlideTitle>
                  <Subtitle>By Joe Blogs</Subtitle>
                </Slide>
              </Canvas>
              <Scroll>
                <ScrollTrack>
                  <Arrow aria-label="Scroll up"><Tri up /></Arrow>
                  <ScrollThumb><GripLines /></ScrollThumb>
                  <Arrow aria-label="Scroll down"><Tri /></Arrow>
                </ScrollTrack>
                <PagerButtons>
                  <Arrow aria-label="Previous slide"><Double up /></Arrow>
                  <Arrow aria-label="Next slide"><Double /></Arrow>
                </PagerButtons>
              </Scroll>
            </Stage>
            <HSplitter />
            <Notes>
              <textarea aria-label="Notes" rows="1" placeholder="Click to add notes" />
              <NotesScroll>
                <Arrow aria-label="Scroll notes up"><Tri up c="#657ba3" /></Arrow>
                <Arrow aria-label="Scroll notes down"><Tri c="#657ba3" /></Arrow>
              </NotesScroll>
            </Notes>
          </Editor>
        </Workspace>
        <StatusBar>
          <StatusItem>Slide 1 of 1</StatusItem>
          <StatusItem>"Office Theme"</StatusItem>
          <StatusItem><SpellIcon /></StatusItem>
          <StatusRight>
            <ViewSet>
              <ViewButton $on aria-label="Normal view"><NormalIcon /></ViewButton>
              <ViewButton aria-label="Slide sorter"><SorterIcon /></ViewButton>
              <ViewButton aria-label="Slide show"><ShowIcon /></ViewButton>
            </ViewSet>
            <Percent>60%</Percent>
            <IconButton aria-label="Zoom out"><RoundIcon /></IconButton>
            <Zoom type="range" min="0" max="100" defaultValue="28" aria-label="Zoom" />
            <IconButton aria-label="Zoom in"><RoundIcon plus /></IconButton>
            <IconButton $w={38} aria-label="Fit slide to window"><FitIcon /></IconButton>
            <GripIcon />
          </StatusRight>
        </StatusBar>
      </Window>
    </>
  );
}
